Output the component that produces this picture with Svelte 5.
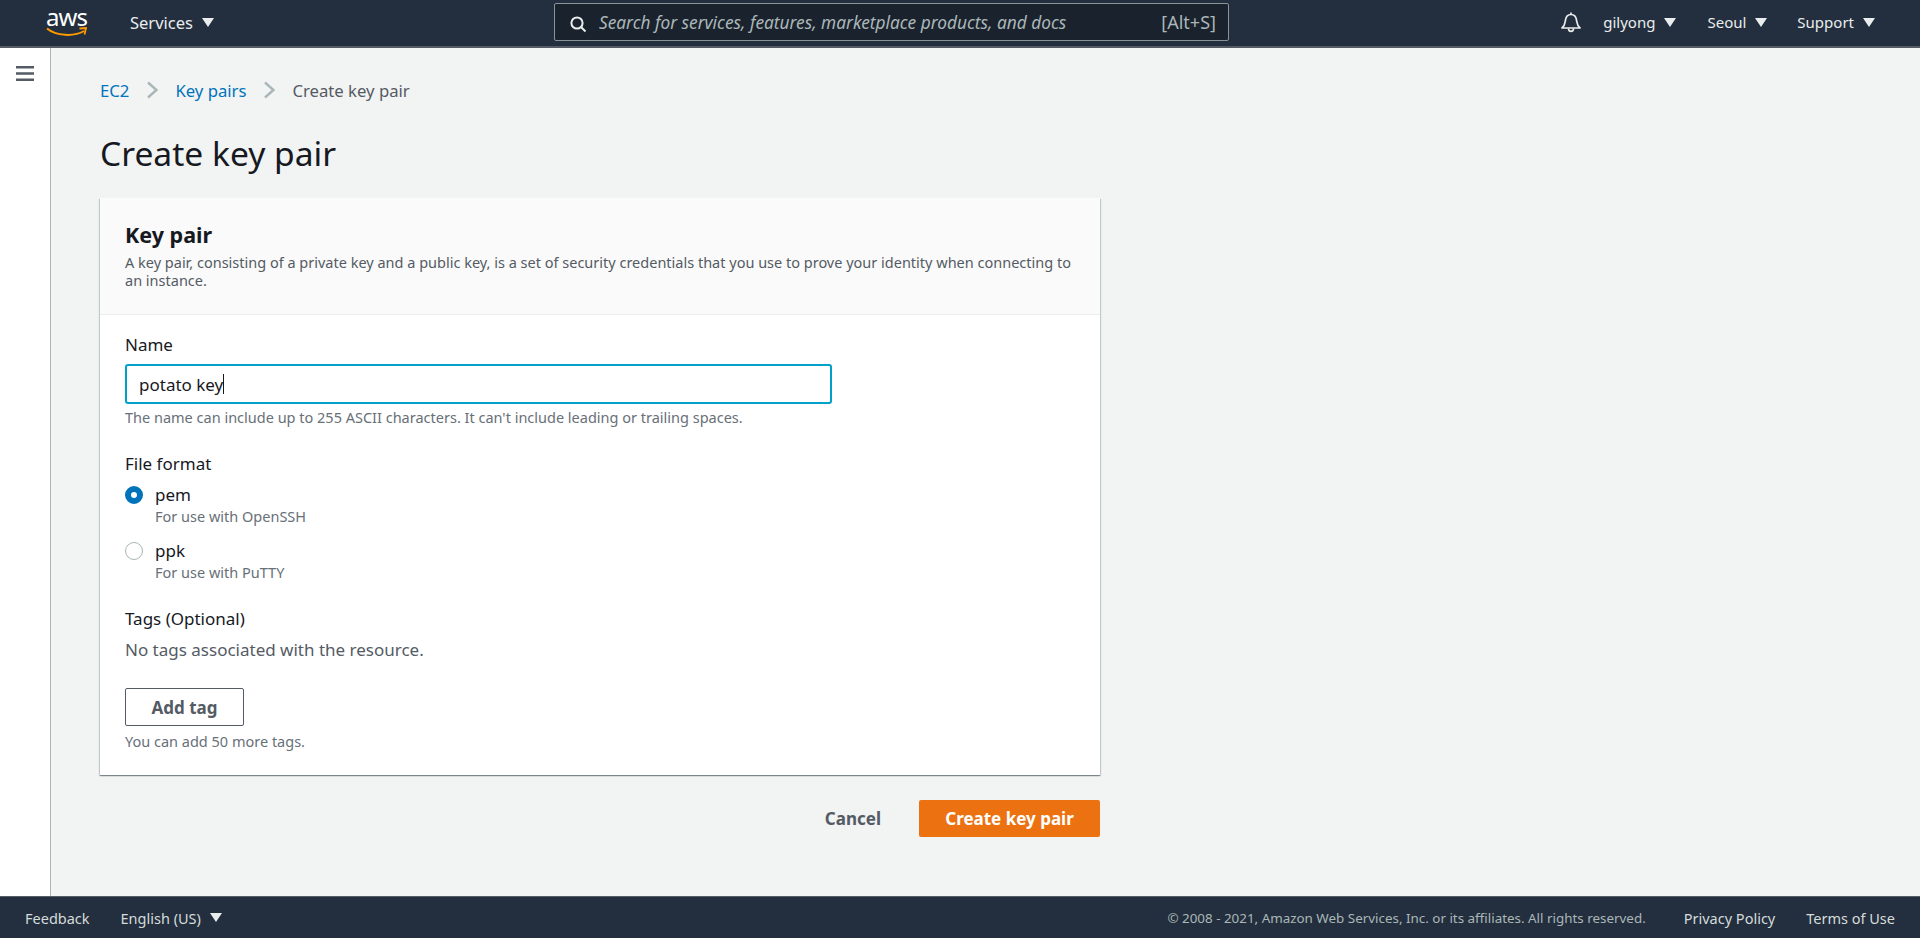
<script lang="ts">
    let keyName = 'potato key'
</script>

<div class="page">
    <header class="topnav">
        <div class="logo">
            <span class="logo-text">aws</span>
            <svg class="smile" width="41" height="10" viewBox="0 0 41 10">
                <path d="M1 1.500 C10 9 28 10 38 4" fill="none" stroke="#f90" stroke-width="2" />
                <path d="M33.500 1.500 L40 1 L38.500 7.500" fill="none" stroke="#f90" stroke-width="1.800" />
            </svg>
        </div>
        <div class="nav-item services">Services <span class="caret"></span></div>

        <div class="search">
            <svg class="search-icon" width="18" height="18" viewBox="0 0 18 18">
                <circle cx="8" cy="8" r="5.600" fill="none" stroke="#eaeded" stroke-width="2" />
                <path d="M12 12 L16.500 16.500" stroke="#eaeded" stroke-width="2" />
            </svg>
            <span class="search-text">Search for services, features, marketplace products, and docs</span>
            <span class="shortcut">[Alt+S]</span>
        </div>

        <div class="nav-right">
            <svg class="bell" width="20" height="21" viewBox="0 0 20 21">
                <path d="M1 16 C4 13.500 4 11 4.500 8 C5 4.500 7 2.500 10 2.500 C13 2.500 15 4.500 15.500 8 C16 11 16 13.500 19 16 Z" fill="none" stroke="#eaeded" stroke-width="1.700" stroke-linejoin="round" />
                <path d="M10 0.500 V2.500" stroke="#eaeded" stroke-width="1.700" />
                <path d="M7.500 16.500 A2.500 2.800 0 0 0 12.500 16.500" fill="none" stroke="#eaeded" stroke-width="1.700" />
            </svg>
            <div class="nav-item user">gilyong <span class="caret"></span></div>
            <div class="nav-item region">Seoul <span class="caret"></span></div>
            <div class="nav-item">Support <span class="caret"></span></div>
        </div>
    </header>

    <div class="body">
        <aside class="side">
            <svg width="18" height="15" viewBox="0 0 18 15">
                <path d="M0 1.250 H18 M0 7.500 H18 M0 13.750 H18" stroke="#545b64" stroke-width="2.500" />
            </svg>
        </aside>

        <main class="main">
            <nav class="crumbs">
                <a href="#ec2">EC2</a>
                <svg class="chev" width="12" height="18" viewBox="0 0 12 18"><path d="M2 1.500 L10.500 9 L2 16.500" fill="none" stroke="#aab7b8" stroke-width="2.500" /></svg>
                <a href="#pairs">Key pairs</a>
                <svg class="chev" width="12" height="18" viewBox="0 0 12 18"><path d="M2 1.500 L10.500 9 L2 16.500" fill="none" stroke="#aab7b8" stroke-width="2.500" /></svg>
                <span class="current">Create key pair</span>
            </nav>

            <h1>Create key pair</h1>

            <section class="card">
                <div class="card-head">
                    <h2>Key pair</h2>
                    <p>A key pair, consisting of a private key and a public key, is a set of security credentials that you use to prove your identity when connecting to an instance.</p>
                </div>
                <div class="card-body">
                    <div class="label">Name</div>
                    <div class="input"><span>{keyName}</span><i class="cursor"></i></div>
                    <div class="hint">The name can include up to 255 ASCII characters. It can't include leading or trailing spaces.</div>

                    <div class="label format">File format</div>
                    <div class="radio-row">
                        <span class="radio on"></span>
                        <div>
                            <div class="radio-name">pem</div>
                            <div class="hint sub">For use with OpenSSH</div>
                        </div>
                    </div>
                    <div class="radio-row">
                        <span class="radio"></span>
                        <div>
                            <div class="radio-name">ppk</div>
                            <div class="hint sub">For use with PuTTY</div>
                        </div>
                    </div>

                    <div class="label tags">Tags (Optional)</div>
                    <div class="no-tags">No tags associated with the resource.</div>
                    <button class="add-tag">Add tag</button>
                    <div class="hint">You can add 50 more tags.</div>
                </div>
            </section>

            <div class="actions">
                <button class="cancel">Cancel</button>
                <button class="primary">Create key pair</button>
            </div>
        </main>
    </div>

    <footer class="footer">
        <span>Feedback</span>
        <span class="lang">English (US) <span class="caret"></span></span>
        <span class="copy">© 2008 - 2021, Amazon Web Services, Inc. or its affiliates. All rights reserved.</span>
        <span class="policy">Privacy Policy</span>
        <span class="terms">Terms of Use</span>
    </footer>
</div>

<style>
    :global(body) {
        margin: 0;
        font-family: "Noto Sans", "Open Sans", sans-serif;
        color: #16191f;
    }

    .page {
        display: flex;
        flex-direction: column;
        height: 938px;
        overflow: hidden;
        background: #f2f3f3;
    }

    .topnav {
        display: flex;
        align-items: center;
        height: 44px;
        flex: none;
        background: #232f3e;
        border-bottom: 2px solid #545b64;
        color: #eaeded;
        font-size: 15px;
        padding-left: 46px;
        padding-right: 45px;
        padding-bottom: 2px;
    }

    .logo {
        display: flex;
        flex-direction: column;
        align-items: center;
        width: 41px;
        margin-right: 43px;
        margin-top: -1px;
    }

    .logo-text {
        font-size: 24px;
        line-height: 19px;
        color: #fff;
        letter-spacing: -1px;
    }

    .smile {
        display: block;
        margin-top: 1px;
    }

    .nav-item {
        display: flex;
        align-items: center;
        gap: 9px;
        white-space: nowrap;
    }

    .services {
        font-size: 16.500px;
    }

    .caret {
        display: inline-block;
        width: 0;
        height: 0;
        border-left: 6px solid transparent;
        border-right: 6px solid transparent;
        border-top: 9px solid #eaeded;
    }

    .search {
        display: flex;
        align-items: center;
        box-sizing: border-box;
        width: 675px;
        height: 38px;
        margin-left: 340px;
        background: #1a222d;
        border: 1px solid #879596;
        border-radius: 2px;
        padding: 0 12px 0 14px;
        color: #aab7b8;
    }

    .search-icon {
        margin-right: 12px;
        margin-top: 3px;
    }

    .search-text {
        font-style: italic;
        font-size: 17.300px;
        flex: 1;
        white-space: nowrap;
    }

    .shortcut {
        font-size: 18px;
    }

    .nav-right {
        display: flex;
        align-items: center;
        margin-left: auto;
    }

    .bell {
        margin-right: 22px;
    }

    .user {
        margin-right: 31px;
    }

    .region {
        margin-right: 30px;
    }

    .body {
        flex: 1;
        display: flex;
        min-height: 0;
    }

    .side {
        flex: none;
        background: #fff;
        border-right: 1px solid #aab7b8;
        padding-top: 16px;
        padding-left: 16px;
        box-sizing: content-box;
        width: 34px;
    }

    .main {
        flex: 1;
        padding-left: 49px;
    }

    .crumbs {
        display: flex;
        align-items: center;
        gap: 17px;
        margin-top: 30px;
        font-size: 16.700px;
        height: 24px;
    }

    .crumbs a {
        color: #0073bb;
        text-decoration: none;
    }

    .current {
        color: #545b64;
    }

    h1 {
        margin: 29px 0 0;
        font-size: 33.600px;
        font-weight: 400;
        line-height: 44px;
    }

    .card {
        width: 1000px;
        margin-top: 23px;
        background: #fff;
        box-shadow: 0 1px 1px 0 rgba(0, 28, 36, 0.3), 1px 1px 1px 0 rgba(0, 28, 36, 0.15), -1px 1px 1px 0 rgba(0, 28, 36, 0.15);
    }

    .card-head {
        box-sizing: border-box;
        height: 117px;
        background: #fafafa;
        border-bottom: 1px solid #eaeded;
        padding: 22px 25px 0;
    }

    h2 {
        margin: 0;
        font-size: 21.500px;
        font-weight: 700;
        line-height: 30px;
    }

    .card-head p {
        margin: 3px 0 0;
        font-size: 14.500px;
        line-height: 18px;
        color: #545b64;
    }

    .card-body {
        padding: 19px 25px 25px;
    }

    .label {
        font-size: 17px;
        line-height: 22px;
    }

    .input {
        display: flex;
        align-items: center;
        box-sizing: border-box;
        width: 707px;
        height: 40px;
        margin-top: 8px;
        border: 2px solid #00a1c9;
        border-radius: 3px;
        padding-left: 12px;
        font-size: 17px;
    }

    .cursor {
        width: 1px;
        height: 20px;
        background: #16191f;
    }

    .hint {
        font-size: 14.500px;
        line-height: 18px;
        color: #687078;
        white-space: nowrap;
    }

    .hint.sub {
        line-height: 20px;
    }

    .input + .hint {
        margin-top: 4px;
    }

    .format {
        margin-top: 27px;
    }

    .radio-row {
        display: flex;
        gap: 12px;
        margin-top: 8px;
        margin-bottom: 13px;
    }

    .radio {
        box-sizing: border-box;
        width: 18px;
        height: 18px;
        margin-top: 3px;
        border: 1px solid #aab7b8;
        border-radius: 50%;
        background: #fff;
    }

    .radio.on {
        border: 6px solid #0073bb;
    }

    .radio-name {
        font-size: 17px;
        line-height: 23px;
    }

    .tags {
        margin-top: 26px;
    }

    .no-tags {
        margin-top: 9px;
        font-size: 17px;
        line-height: 22px;
        color: #545b64;
    }

    button {
        font-family: inherit;
        cursor: pointer;
    }

    .add-tag {
        display: block;
        box-sizing: border-box;
        width: 119px;
        height: 38px;
        margin: 27px 0 6px;
        background: #fff;
        border: 1px solid #545b64;
        border-radius: 2px;
        font-size: 17px;
        font-weight: 700;
        color: #545b64;
        padding: 0;
    }

    .actions {
        display: flex;
        justify-content: flex-end;
        align-items: center;
        width: 1000px;
        margin-top: 25px;
        gap: 38px;
    }

    .cancel {
        background: none;
        border: none;
        padding: 0;
        font-size: 17px;
        font-weight: 700;
        color: #545b64;
    }

    .primary {
        box-sizing: border-box;
        width: 181px;
        height: 37px;
        background: #ec7211;
        border: none;
        border-radius: 2px;
        color: #fff;
        font-size: 17px;
        font-weight: 700;
        padding: 0;
    }

    .footer {
        display: flex;
        align-items: center;
        flex: none;
        box-sizing: border-box;
        height: 42px;
        background: #232f3e;
        border-top: 1px solid #545b64;
        color: #d5dbdb;
        font-size: 14.500px;
        padding: 0 25px;
    }

    .lang {
        display: flex;
        align-items: center;
        gap: 9px;
        margin-left: 31px;
    }

    .copy {
        margin-left: auto;
        font-size: 13.400px;
        color: #aab7b8;
    }

    .policy {
        margin-left: 38px;
    }

    .terms {
        margin-left: 31px;
    }
</style>
